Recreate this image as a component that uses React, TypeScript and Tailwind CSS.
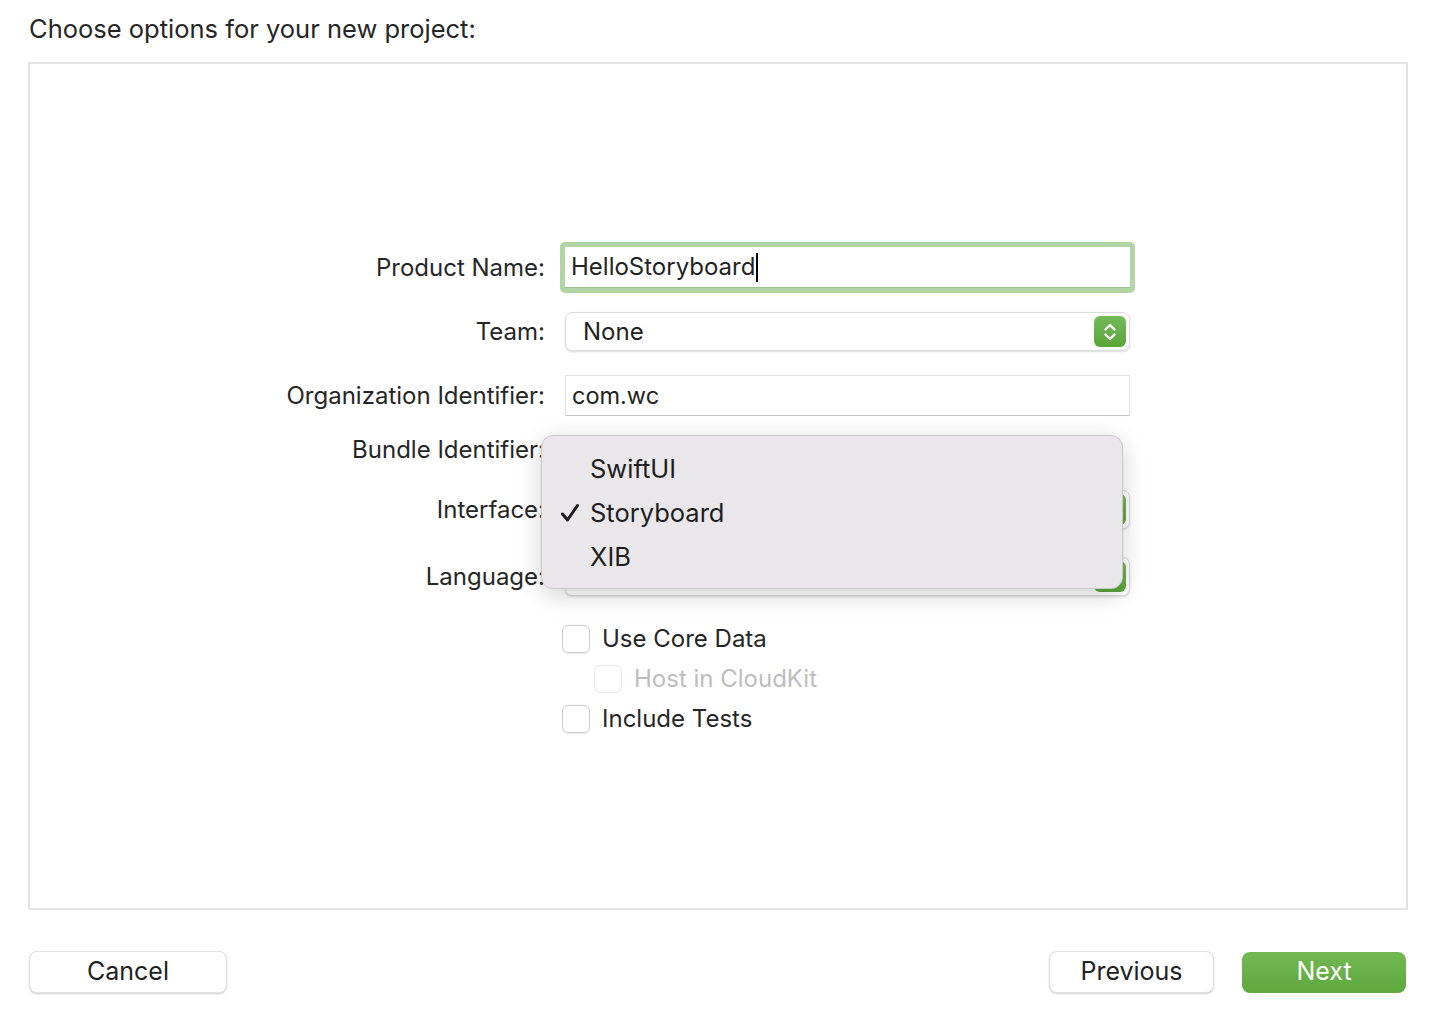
const font = { fontFamily: "Inter, 'Liberation Sans', sans-serif" };

function Stepper() {
  return (
    <div className="w-[32px] h-[31px] rounded-[6px] bg-gradient-to-b from-[#74b957] to-[#5ba53a] flex items-center justify-center">
      <svg width="14" height="22" viewBox="0 0 14 22" fill="none">
        <path d="M2.5 8.5 L7 4 L11.5 8.5" stroke="white" strokeWidth="2.4" strokeLinecap="round" strokeLinejoin="round" />
        <path d="M2.5 13.5 L7 18 L11.5 13.5" stroke="white" strokeWidth="2.4" strokeLinecap="round" strokeLinejoin="round" />
      </svg>
    </div>
  );
}

// values of the popups under the open menu are hidden, so they are left empty
function Popup({ value }: { value?: string }) {
  return (
    <div className="ml-[5px] w-[565px] h-[39px] bg-white rounded-[7px] border border-[#dcdcdc] shadow-[0_1px_2px_rgba(0,0,0,0.15)] flex items-center justify-between pl-[17px] pr-[3px]">
      <span className="text-[24px] text-[#232323]">{value}</span>
      <Stepper />
    </div>
  );
}

function Row({ label, height, children }: { label: string; height: string; children?: React.ReactNode }) {
  return (
    <div className={`flex items-center ${height}`}>
      <div className="w-[515px] text-right text-[24px] text-[#262626]">{label}</div>
      <div className="ml-[15px] relative">{children}</div>
    </div>
  );
}

function CheckRow({ label, disabled, indent }: { label: string; disabled?: boolean; indent?: boolean }) {
  return (
    <div className={`flex items-center h-[28px] ${indent ? "ml-[564px]" : "ml-[532px]"}`}>
      <div
        className={`w-[28px] h-[28px] rounded-[6px] bg-white border ${
          disabled ? "border-[#e8e8e8]" : "border-[#cdcdcd] shadow-[0_1px_1px_rgba(0,0,0,0.08)]"
        }`}
      />
      <span className={`ml-[12px] text-[24px] ${disabled ? "text-[#bdbdbd]" : "text-[#262626]"}`}>{label}</span>
    </div>
  );
}

export default function App() {
  return (
    <div className="w-[1434px] h-[1010px] bg-white" style={font}>
      <div className="pt-[13px] pl-[29px] text-[25.5px] leading-[32px] text-[#262626]">
        Choose options for your new project:
      </div>

      <div className="ml-[28px] mt-[17px] w-[1380px] h-[848px] border-2 border-[#e4e4e4]">
        <div className="flex flex-col pt-[178px]">
          <Row label="Product Name:" height="h-[51px]">
            <div className="w-[575px] h-[51px] rounded-[5px] bg-[#b3d4a5] p-[5px]">
              <div className="w-full h-full bg-white border-b border-[#9fc191] flex items-center pl-[6px]">
                <span className="text-[24px] text-[#232323]">HelloStoryboard</span>
                <span className="w-[2px] h-[29px] bg-black ml-[1px]" />
              </div>
            </div>
          </Row>

          <div className="mt-[19px]">
            <Row label="Team:" height="h-[39px]">
              <Popup value="None" />
            </Row>
          </div>

          <div className="mt-[24px]">
            <Row label="Organization Identifier:" height="h-[41px]">
              <div className="ml-[5px] w-[565px] h-[41px] bg-white border border-[#e4e4e4] border-b-[#c4c4c4] flex items-center pl-[6px]">
                <span className="text-[23.5px] text-[#232323]">com.wc</span>
              </div>
            </Row>
          </div>

          <div className="mt-[16px]">
            <Row label="Bundle Identifier:" height="h-[36px]">
              <div className="w-[575px] h-[36px]" />
              <div className="absolute left-[-19px] top-[3px] z-10 w-[582px] h-[154px] rounded-[12px] bg-[#e9e7ea] border border-[#c9c7ca] shadow-[0_6px_24px_rgba(0,0,0,0.18)] pt-[11px]">
                {["SwiftUI", "Storyboard", "XIB"].map((item) => (
                  <div key={item} className="h-[44px] flex items-center">
                    <div className="w-[48px] flex justify-end pr-[10px]">
                      {item === "Storyboard" && (
                        <svg width="20" height="20" viewBox="0 0 20 20" fill="none">
                          <path d="M2.5 11 L7.5 17 L17.5 2.5" stroke="#1e1e1e" strokeWidth="3" strokeLinecap="round" strokeLinejoin="round" />
                        </svg>
                      )}
                    </div>
                    <span className="text-[25.5px] text-[#1e1e1e]">{item}</span>
                  </div>
                ))}
              </div>
            </Row>
          </div>

          <div className="mt-[22px]">
            <Row label="Interface:" height="h-[39px]">
              <Popup />
            </Row>
          </div>

          <div className="mt-[28px]">
            <Row label="Language:" height="h-[39px]">
              <Popup />
            </Row>
          </div>

          <div className="mt-[29px] flex flex-col gap-[12px]">
            <CheckRow label="Use Core Data" />
            <CheckRow label="Host in CloudKit" disabled indent />
            <CheckRow label="Include Tests" />
          </div>
        </div>
      </div>

      <div className="flex items-center mt-[41px] pl-[29px] pr-[28px]">
        <button className="w-[198px] h-[42px] rounded-[8px] bg-white border border-[#e0e0e0] shadow-[0_1px_2px_rgba(0,0,0,0.2)] text-[25px] text-[#222]">
          Cancel
        </button>
        <div className="flex-1" />
        <button className="w-[165px] h-[42px] rounded-[8px] bg-white border border-[#e0e0e0] shadow-[0_1px_2px_rgba(0,0,0,0.2)] text-[25px] text-[#222]">
          Previous
        </button>
        <button className="ml-[28px] w-[164px] h-[41px] rounded-[8px] bg-gradient-to-b from-[#72b853] to-[#5ea83d] text-[25px] text-white">
          Next
        </button>
      </div>
    </div>
  );
}
